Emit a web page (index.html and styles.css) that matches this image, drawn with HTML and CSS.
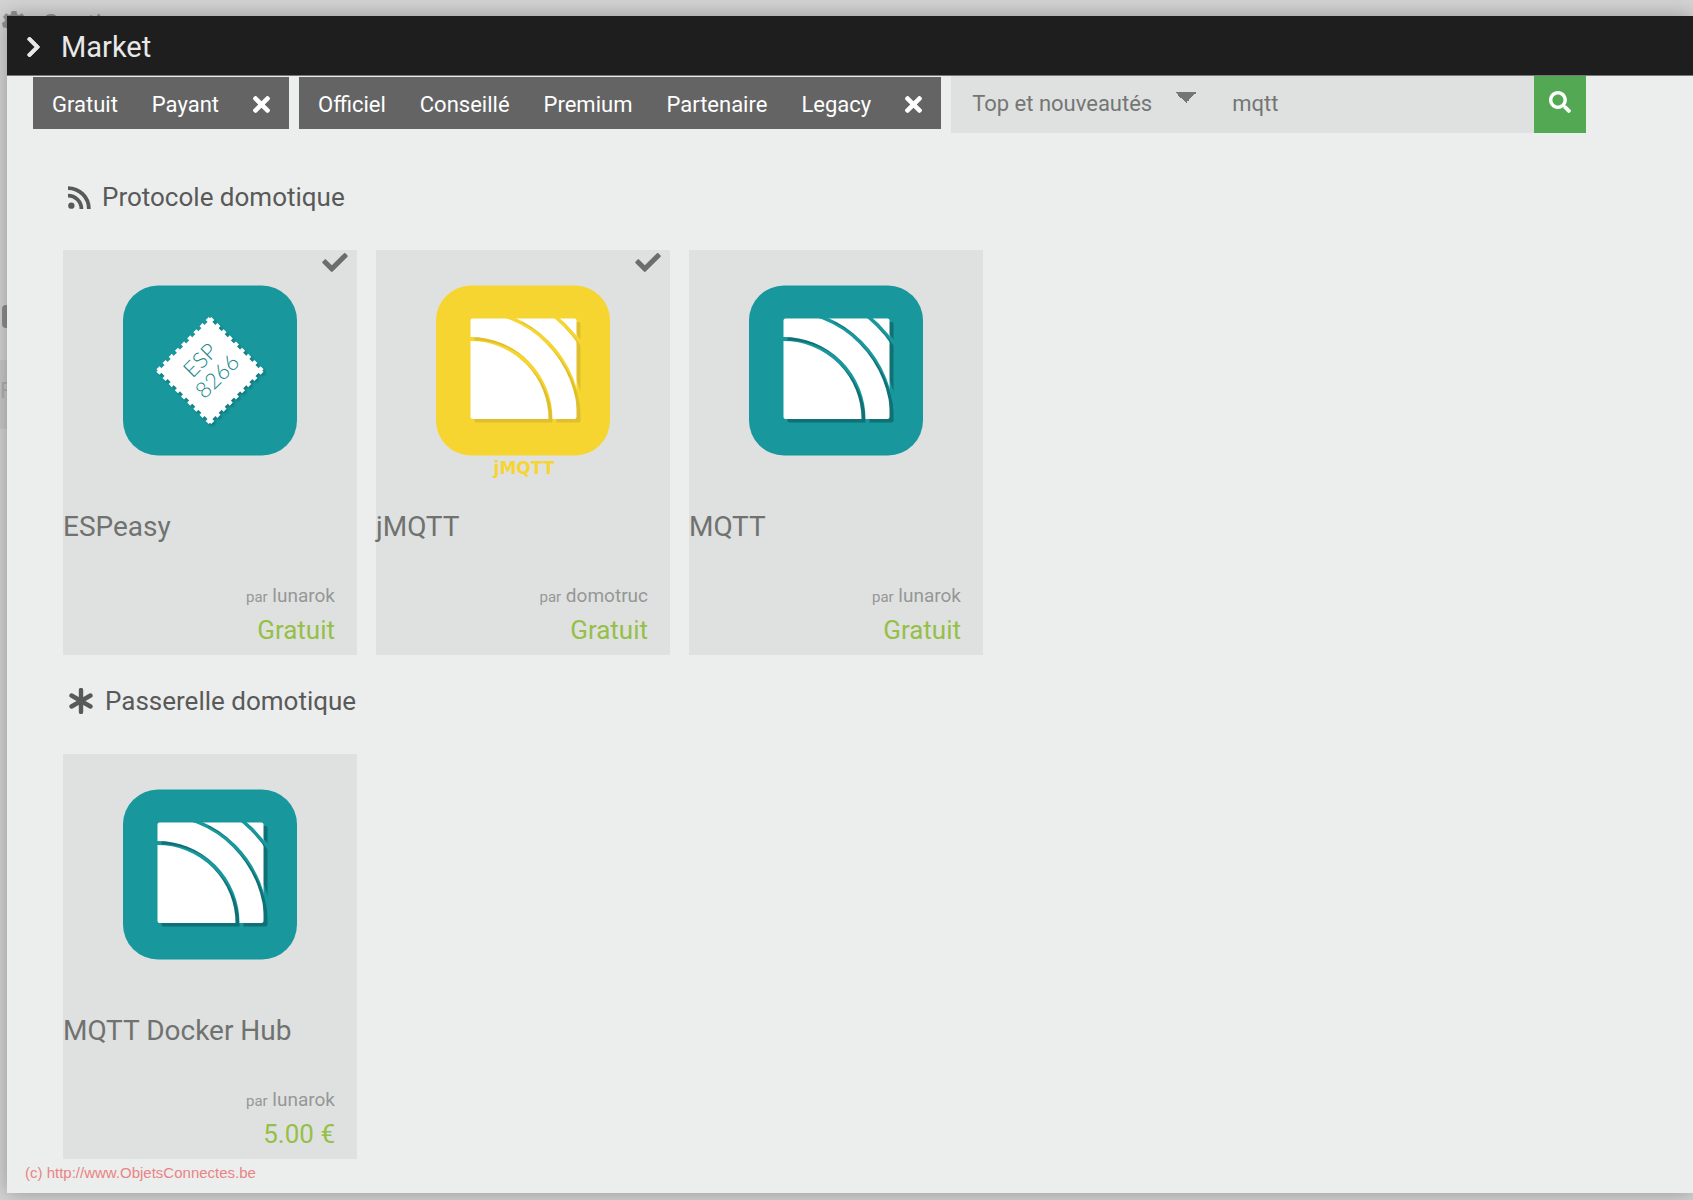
FILE: index.html
```html
<!DOCTYPE html>
<html lang="fr">
<head>
<meta charset="utf-8">
<meta name="viewport" content="width=device-width, initial-scale=1">
<title>Market</title>
<link rel="stylesheet" href="styles.css">
</head>
<body>
<svg class="sprite" aria-hidden="true">
  <defs>
    <symbol id="i-times" viewBox="0 80 352 352"><path d="M242.72 256l100.07-100.07c12.28-12.28 12.28-32.19 0-44.48l-22.24-22.24c-12.28-12.28-32.19-12.28-44.48 0L176 189.28 75.93 89.21c-12.28-12.28-32.19-12.28-44.48 0L9.21 111.45c-12.28 12.28-12.28 32.19 0 44.48L109.28 256 9.21 356.07c-12.28 12.28-12.28 32.19 0 44.48l22.24 22.24c12.28 12.28 32.2 12.28 44.48 0L176 322.72l100.07 100.07c12.28 12.28 32.2 12.28 44.48 0l22.24-22.24c12.28-12.28 12.28-32.19 0-44.48L242.72 256z"/></symbol>
    <symbol id="i-check" viewBox="0 65 512 382"><path d="M173.898 439.404l-166.4-166.4c-9.997-9.997-9.997-26.206 0-36.204l36.203-36.204c9.997-9.998 26.207-9.998 36.204 0L192 312.69 432.095 72.596c9.997-9.997 26.207-9.997 36.204 0l36.203 36.204c9.997 9.997 9.997 26.206 0 36.204l-294.4 294.401c-9.998 9.997-26.207 9.997-36.204-.001z"/></symbol>
    <symbol id="i-search" viewBox="0 0 512 512"><path d="M505 442.7L405.3 343c-4.5-4.5-10.6-7-17-7H372c27.6-35.3 44-79.7 44-128C416 93.1 322.9 0 208 0S0 93.1 0 208s93.1 208 208 208c48.3 0 92.7-16.4 128-44v16.3c0 6.4 2.5 12.5 7 17l99.7 99.7c9.4 9.4 24.6 9.4 33.9 0l28.3-28.3c9.4-9.4 9.4-24.6.1-34zM208 336c-70.7 0-128-57.2-128-128 0-70.7 57.2-128 128-128 70.7 0 128 57.2 128 128 0 70.7-57.2 128-128 128z"/></symbol>
    <symbol id="i-chevron" viewBox="27 37 266 438"><path d="M285.476 272.971L91.132 467.314c-9.373 9.373-24.569 9.373-33.941 0l-22.667-22.667c-9.357-9.357-9.375-24.522-.04-33.901L188.505 256 34.484 101.255c-9.335-9.379-9.317-24.544.04-33.901l22.667-22.667c9.373-9.373 24.569-9.373 33.941 0L285.475 239.03c9.373 9.372 9.373 24.568.001 33.941z" stroke="currentColor" stroke-width="16"/></symbol>
    <symbol id="i-rss" viewBox="0 0 24 24"><circle cx="3.500" cy="20.500" r="3.300"/><path d="M0 10A14 14 0 0 1 14 24M0 2.200A21.800 21.800 0 0 1 21.800 24" fill="none" stroke="currentColor" stroke-width="4"/></symbol>
    <symbol id="i-asterisk" viewBox="0 0 26 26"><path d="M13 2V24M3.500 7.500L22.500 18.500M3.500 18.500L22.500 7.500" fill="none" stroke="currentColor" stroke-width="4.400" stroke-linecap="round"/></symbol>
    <symbol id="i-cog" viewBox="0 0 24 24"><path d="M9.500 0h5l.6 3.200 2 .9L20 2.300 23 6l-2 2.500.5 2L24 12l-1 4.500-3 .3-1.500 1.700.3 3-4.300 1.500L12 21l-2.500 2-4.300-1.500.3-3L4 16.800l-3-.3L0 12l2.500-1.500.5-2L1 6l3-3.700 2.900 1.800 2-.9z"/></symbol>
    <!-- Square cut by three concentric arcs -->
    <mask id="arcs" maskUnits="userSpaceOnUse" x="0" y="0" width="174" height="171">
      <rect x="34.500" y="33.500" width="106" height="100.500" rx="2" fill="#fff"/>
      <g fill="none" stroke="#000">
        <circle cx="34.500" cy="134" r="80" stroke-width="4"/>
        <circle cx="34.500" cy="134" r="108.700" stroke-width="3.600"/>
        <circle cx="34.500" cy="134" r="133" stroke-width="3.600"/>
      </g>
    </mask>
    <symbol id="logo-mqtt" viewBox="0 0 174 171">
      <rect y=".5" width="174" height="170" rx="35" fill="currentColor"/>
      <g transform="translate(4 3.500)"><rect width="174" height="171" class="logo-shade" mask="url(#arcs)"/></g>
      <rect width="174" height="171" fill="#fff" mask="url(#arcs)"/>
    </symbol>
    <g id="stamp">
      <rect x="-36" y="-36" width="72" height="72" stroke="none"/>
      <path d="M-37-37H37M37-37V37M37 37H-37M-37 37V-37" fill="none" stroke-width="3.600" stroke-dasharray="4.353 4.353"/>
    </g>
  </defs>
</svg>

<div class="backdrop" aria-hidden="true">
  <div class="backdrop-title"><svg class="backdrop-cog"><use href="#i-cog"/></svg><span>Gestion</span></div>
  <div class="backdrop-badge"></div>
  <div class="backdrop-panel">F</div>
</div>

<main class="dialog">
  <header class="dialog-head">
    <svg class="chevron" aria-hidden="true"><use href="#i-chevron"/></svg>
    <h1>Market</h1>
  </header>

  <form class="toolbar">
    <div class="btn-group">
      <button type="button">Gratuit</button>
      <button type="button">Payant</button>
      <button type="button" aria-label="Effacer le filtre de prix"><svg class="times"><use href="#i-times"/></svg></button>
    </div>
    <div class="btn-group">
      <button type="button">Officiel</button>
      <button type="button">Conseillé</button>
      <button type="button">Premium</button>
      <button type="button">Partenaire</button>
      <button type="button">Legacy</button>
      <button type="button" aria-label="Effacer le filtre de certification"><svg class="times"><use href="#i-times"/></svg></button>
    </div>
    <div class="search">
      <select aria-label="Catégorie"><option>Top et nouveautés</option></select>
      <input type="text" value="mqtt" aria-label="Rechercher">
      <button type="submit" aria-label="Lancer la recherche"><svg class="loupe"><use href="#i-search"/></svg></button>
    </div>
  </form>

  <section class="category">
    <h2><svg class="rss" aria-hidden="true"><use href="#i-rss"/></svg>Protocole domotique</h2>
    <div class="cards">
      <article class="card">
        <svg class="installed" role="img" aria-label="Installé"><use href="#i-check"/></svg>
        <svg class="logo" viewBox="0 0 174 200" aria-hidden="true">
          <rect y=".5" width="174" height="170" rx="35" fill="currentColor"/>
          <g transform="translate(89 87.500) rotate(45)" class="stamp-shade"><use href="#stamp"/></g>
          <g transform="translate(87 85.500) rotate(45)" fill="#fff" stroke="#fff"><use href="#stamp"/></g>
          <g class="stamp-text">
            <text transform="translate(77 75) rotate(-45)" y="8">ESP</text>
            <text transform="translate(94 91) rotate(-45)" y="8">8266</text>
          </g>
        </svg>
        <h3>ESPeasy</h3>
        <p class="author"><small>par</small> lunarok</p>
        <p class="price">Gratuit</p>
      </article>
      <article class="card">
        <svg class="installed" role="img" aria-label="Installé"><use href="#i-check"/></svg>
        <svg class="logo logo-yellow" viewBox="0 0 174 200" aria-hidden="true">
          <use href="#logo-mqtt" width="174" height="171"/>
          <text class="logo-caption" x="88" y="189">jMQTT</text>
        </svg>
        <h3>jMQTT</h3>
        <p class="author"><small>par</small> domotruc</p>
        <p class="price">Gratuit</p>
      </article>
      <article class="card">
        <svg class="logo" viewBox="0 0 174 200" aria-hidden="true"><use href="#logo-mqtt" width="174" height="171"/></svg>
        <h3>MQTT</h3>
        <p class="author"><small>par</small> lunarok</p>
        <p class="price">Gratuit</p>
      </article>
    </div>
  </section>

  <section class="category">
    <h2><svg class="asterisk" aria-hidden="true"><use href="#i-asterisk"/></svg>Passerelle domotique</h2>
    <div class="cards">
      <article class="card">
        <svg class="logo" viewBox="0 0 174 200" aria-hidden="true"><use href="#logo-mqtt" width="174" height="171"/></svg>
        <h3>MQTT Docker Hub</h3>
        <p class="author"><small>par</small> lunarok</p>
        <p class="price">5.00 €</p>
      </article>
    </div>
  </section>

  <footer class="copyright">(c) http://www.ObjetsConnectes.be</footer>
</main>
</body>
</html>
```
FILE: styles.css
```css
* { box-sizing: border-box; }

body {
  margin: 0;
  min-height: 100vh;
  display: flex;
  position: relative;
  overflow-x: hidden;
  background: #d4d4d4;
  font-family: Roboto, "Liberation Sans", sans-serif;
  font-size: 22px;
  color: #707270;
}

h1, h2, h3, p { margin: 0; font-weight: 400; }
svg { display: block; flex: none; fill: currentColor; }
button, input, select { font: inherit; border: 0; border-radius: 0; margin: 0; }
.sprite { position: absolute; width: 0; height: 0; }

/* Dimmed page behind the dialog */
.backdrop {
  position: absolute;
  inset: 0;
  overflow: hidden;
  padding-top: 8px;
  color: #929292;
}
.backdrop-title { display: flex; gap: 16px; height: 32px; padding-left: 2px; font-size: 26px; line-height: 32px; }
.backdrop-title span { height: 8px; overflow: hidden; }
.backdrop-cog { width: 24px; height: 24px; margin-top: 3px; }
.backdrop-badge { width: 40px; height: 23px; margin: 265px 0 32px 2px; border-radius: 4px; background: #8e8e8e; }
.backdrop-panel { height: 69px; padding-top: 17px; line-height: 28px; background: #c9c9c9; color: #b0b0b0; }

.dialog {
  position: relative;
  flex: 1;
  min-width: 0;
  margin: 16px 0 9px 7px;
  background: #eceeed;
  box-shadow: 0 0 20px rgba(0, 0, 0, .3);
}
.dialog-head {
  display: flex;
  align-items: center;
  gap: 21px;
  height: 60px;
  padding: 2px 0 0 20px;
  background: #1e1e1e;
  border-bottom: 1px solid #777;
  color: #e8e8e8;
}
.dialog-head h1 { font-size: 29px; line-height: 36px; }
.chevron { width: 13px; height: 20px; }

.toolbar { display: flex; align-items: flex-start; flex-wrap: wrap; padding-left: 26px; }
.btn-group { display: flex; height: 52px; margin: 1px 10px 0 0; padding: 0 2px; background: #646464; }
.btn-group button { display: flex; align-items: center; padding: 2px 17px 0; background: none; color: #fff; }
.times { width: 17px; height: 17px; }
.search { display: flex; flex: 0 1 635px; height: 57px; }
.search select {
  flex: 0 0 263px;
  appearance: none;
  padding: 0 21px 2px;
  background: #dfe1e0 no-repeat;
  background-image:
    linear-gradient(to top right, transparent 50%, #747674 50%),
    linear-gradient(to top left, transparent 50%, #747674 50%);
  background-size: 11px 11px;
  background-position: right 28px top 16px, right 17px top 16px;
  color: #747674;
}
.search input { flex: 1; min-width: 0; padding: 0 18px 2px; background: #dfe1e0; color: #747674; }
.search button { display: flex; justify-content: center; width: 52px; padding: 15px 0 0; background: #53a853; color: #fff; }
.loupe { width: 22px; height: 22px; }

.category { padding-left: 56px; }
.category h2 {
  display: flex;
  align-items: center;
  gap: 11px;
  padding: 0 5px;
  margin-bottom: 35px;
  font-size: 26px;
  line-height: 36px;
  color: #595959;
}
.toolbar + .category { margin-top: 46px; }
.category + .category { margin-top: 28px; }
.rss { width: 23px; height: 23px; }
.asterisk { width: 26px; height: 26px; }

.cards { display: flex; flex-wrap: wrap; gap: 19px; }
.card { position: relative; width: 294px; padding: 35px 0 7px; background: #dfe1e0; }
.installed { position: absolute; top: 3px; right: 9px; width: 26px; height: 19px; color: #6c6e6d; }
.logo { width: 174px; height: 200px; margin: 0 auto; color: #18979c; --shade: #0f7175; }
.logo-yellow { color: #f6d530; --shade: #dfbf2c; }
.logo-shade { fill: var(--shade); }
.logo-caption { font: bold 17px "DejaVu Sans", sans-serif; text-anchor: middle; }
.stamp-shade { fill: #0f7175; stroke: #0f7175; opacity: .7; filter: blur(1px); }
.stamp-text { font: 300 22px Lato, sans-serif; text-anchor: middle; fill: #18888c; }

.card h3 { margin-top: 24px; font-size: 28px; line-height: 36px; }
.author { margin-top: 39px; padding-right: 22px; text-align: right; font-size: 19px; line-height: 24px; color: #959796; }
.author small { font-size: 15px; }
.price { padding-right: 22px; text-align: right; font-size: 26px; line-height: 36px; margin-top: 3px; color: #96bf48; }

.copyright {
  padding: 4px 0 10px 18px;
  font: 15px/20px "Liberation Sans", Arial, sans-serif;
  color: #e88484;
}
```
